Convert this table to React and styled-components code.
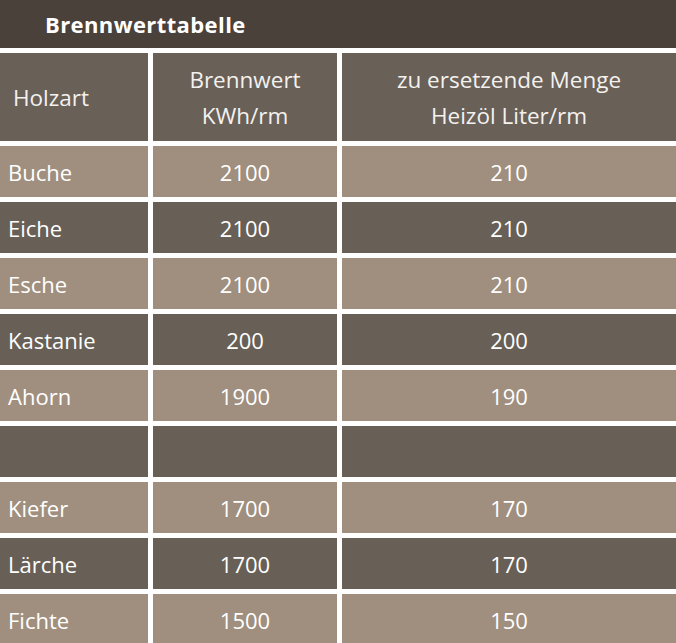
import { createGlobalStyle, styled } from "styled-components"

const GlobalStyle = createGlobalStyle`
    body {
        margin: 0;
        background: #ffffff;
        font-family: 'Open Sans', 'DejaVu Sans', sans-serif;
    }
`

const rows = [
    { wood: "Buche", kwh: "2100", oil: "210" },
    { wood: "Eiche", kwh: "2100", oil: "210" },
    { wood: "Esche", kwh: "2100", oil: "210" },
    { wood: "Kastanie", kwh: "200", oil: "200" },
    { wood: "Ahorn", kwh: "1900", oil: "190" },
    { wood: "", kwh: "", oil: "" },
    { wood: "Kiefer", kwh: "1700", oil: "170" },
    { wood: "Lärche", kwh: "1700", oil: "170" },
    { wood: "Fichte", kwh: "1500", oil: "150" },
]

export default function App(){
    return(
        <>
            <GlobalStyle/>
            <Table>
                <TitleBar>Brennwerttabelle</TitleBar>
                <HeadCell $align="left">Holzart</HeadCell>
                <HeadCell>Brennwert<br/>KWh/rm</HeadCell>
                <HeadCell>zu ersetzende Menge<br/>Heizöl Liter/rm</HeadCell>
                {rows.map((r, i) => (
                    <Row key={i}>
                        <Cell $light={i % 2 === 0} $align="left">{r.wood}</Cell>
                        <Cell $light={i % 2 === 0}>{r.kwh}</Cell>
                        <Cell $light={i % 2 === 0}>{r.oil}</Cell>
                    </Row>
                ))}
            </Table>
        </>
    )
}

const Table = styled.div`
    display: grid;
    grid-template-columns: 148px 184px 1fr;
    grid-template-rows: 48px 88px;
    grid-auto-rows: 51px;
    gap: 5px;
    width: 676px;
    height: 643px;
    overflow: hidden;
    background: #ffffff;
`
const TitleBar = styled.div`
    grid-column: 1 / -1;
    display: flex;
    align-items: center;
    padding-left: 45px;
    background-color: #4a413a;
    color: #ffffff;
    font-size: 22px;
    font-weight: 700;
    letter-spacing: 0.4px;
`
const HeadCell = styled.div`
    display: flex;
    align-items: center;
    justify-content: ${p => p.$align === "left" ? "flex-start" : "center"};
    text-align: ${p => p.$align === "left" ? "left" : "center"};
    padding-left: ${p => p.$align === "left" ? "13px" : "0"};
    padding-top: 2px;
    background-color: #696058;
    color: #f4f1ee;
    font-size: 22.5px;
    line-height: 36px;
`
const Row = styled.div`
    display: contents;
`
const Cell = styled.div`
    display: flex;
    align-items: center;
    justify-content: ${p => p.$align === "left" ? "flex-start" : "center"};
    padding-left: ${p => p.$align === "left" ? "8px" : "0"};
    background-color: ${p => p.$light ? "#a08f7e" : "#686056"};
    color: #ffffff;
    font-size: 22px;
`
